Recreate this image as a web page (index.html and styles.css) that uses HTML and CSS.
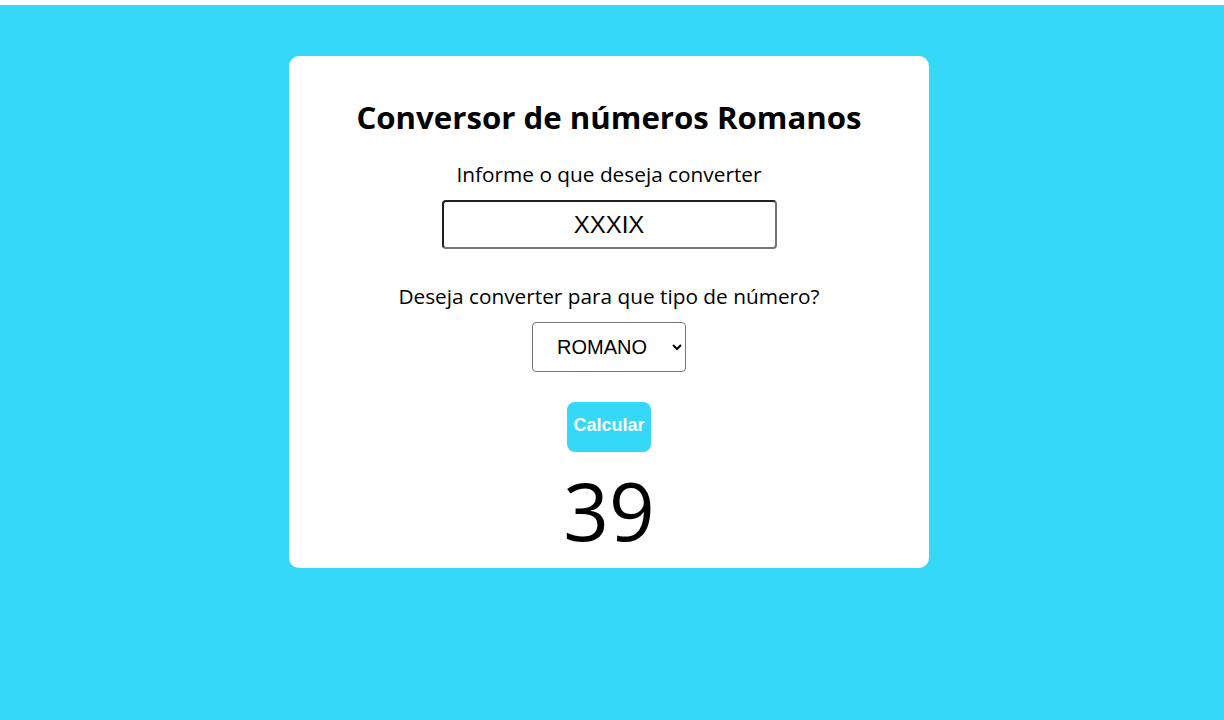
FILE: index.html
```html
<!DOCTYPE html>
<html lang="pt-BR">
<head>
<meta charset="utf-8">
<title>Conversor de números Romanos</title>
<link rel="stylesheet" href="styles.css">
</head>
<body>
<main class="page">
  <section class="card">
    <h1 class="title">Conversor de números Romanos</h1>
    <label class="label label-first" for="valor">Informe o que deseja converter</label>
    <input class="field" id="valor" type="text" value="XXXIX">
    <label class="label label-second" for="tipo">Deseja converter para que tipo de número?</label>
    <select class="choice" id="tipo">
      <option>ROMANO</option>
      <option>ARÁBICO</option>
    </select>
    <button class="btn" type="button">Calcular</button>
    <div class="result">39</div>
  </section>
</main>
</body>
</html>
```
FILE: styles.css
```css
html {
  background: #ffffff;
}
body {
  margin: 0;
  padding-top: 5px;
  font-family: "Open Sans", "Liberation Sans", sans-serif;
}
.page {
  background: #35d9f7;
  min-height: 715px;
  box-sizing: border-box;
  padding: 51px 6px 0 0;
  display: flex;
  justify-content: center;
  align-items: flex-start;
}
.card {
  width: 640px;
  background: #ffffff;
  border-radius: 10px;
  padding: 41px 0 4px;
  box-sizing: border-box;
  display: flex;
  flex-direction: column;
  align-items: center;
}
.title {
  margin: 0;
  font-size: 31.2px;
  font-weight: 700;
  line-height: 41px;
  color: #000;
}
.label {
  display: block;
  font-size: 20.8px;
  line-height: 27px;
  color: #000;
}
.label-first {
  margin-top: 23px;
}
.label-second {
  margin-top: 34px;
}
.field {
  margin-top: 12px;
  width: 335px;
  height: 49px;
  box-sizing: border-box;
  border: 2px solid #767676;
  border-top-color: #1f1f1f;
  border-left-color: #1f1f1f;
  border-radius: 4px;
  font-family: "Liberation Sans", Arial, sans-serif;
  font-size: 24px;
  text-align: center;
  color: #000;
  padding: 0;
  background: #fff;
}
.choice {
  margin-top: 12px;
  width: 154px;
  height: 50px;
  box-sizing: border-box;
  border: 1px solid #767676;
  border-radius: 4px;
  font-family: "Liberation Sans", Arial, sans-serif;
  font-size: 20px;
  color: #000;
  background: #fff;
  padding: 0 0 0 20px;
}
.btn {
  margin-top: 30px;
  width: 84px;
  height: 50px;
  border: none;
  border-radius: 8px;
  background: #35d9f7;
  color: #fff;
  font-family: "Liberation Sans", Arial, sans-serif;
  font-weight: 700;
  font-size: 18px;
  padding: 0 0 3px;
}
.result {
  margin-top: 3px;
  font-size: 80px;
  line-height: 109px;
  color: #000;
}
```
